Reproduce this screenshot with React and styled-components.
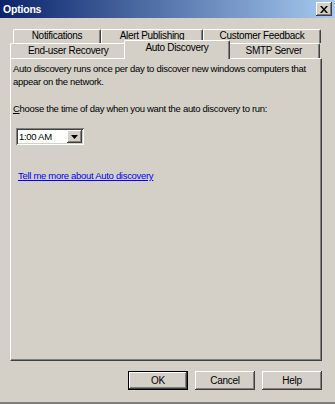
import React from "react";
import styled, { createGlobalStyle, css } from "styled-components";

const GlobalStyle = createGlobalStyle`
  html, body {
    margin: 0;
    padding: 0;
    background: #d4d0c8;
  }
  body {
    font-family: "Liberation Sans", Arial, sans-serif;
    font-size: 9.5px;
    letter-spacing: -0.3px;
    color: #000;
  }
`;

const raised = css`
  box-shadow: inset -1px -1px #404040, inset 1px 1px #ffffff,
    inset -2px -2px #808080, inset 2px 2px #d4d0c8;
`;

const Window = styled.div`
  width: 335px;
  height: 404px;
  background: #d4d0c8;
  display: flex;
  flex-direction: column;
  box-sizing: border-box;
  border-bottom: 2px solid #808080;
  overflow: hidden;
`;

const TitleBar = styled.div`
  height: 18px;
  flex: none;
  display: flex;
  align-items: center;
  justify-content: space-between;
  padding: 0 3px 0 3px;
  background: linear-gradient(to right, #0a246a, #a6caf0);
`;

const Title = styled.span`
  color: #fff;
  font-weight: bold;
  font-size: 10.5px;
  letter-spacing: -0.2px;
`;

const CloseButton = styled.div`
  width: 16px;
  height: 14px;
  background: #d4d0c8;
  ${raised};
  display: flex;
  align-items: center;
  justify-content: center;
`;

const Body = styled.div`
  flex: 1;
  display: flex;
  flex-direction: column;
  padding: 11px 13px 0 10px;
`;

const TabRow = styled.div`
  display: flex;
  height: ${(p) => p.$h}px;
  margin-left: ${(p) => p.$indent}px;
  margin-right: ${(p) => p.$right}px;
  align-items: flex-end;
`;

const Tab = styled.div`
  width: ${(p) => p.$w}px;
  height: 100%;
  box-sizing: border-box;
  background: #d4d0c8;
  border-top: 1px solid #fff;
  border-left: 1px solid #fff;
  border-right: 1px solid #404040;
  box-shadow: inset -1px 0 #808080;
  border-radius: 2px 2px 0 0;
  display: flex;
  align-items: flex-start;
  justify-content: center;
  white-space: nowrap;
  font-size: 10px;
  line-height: 12px;
  padding-top: ${(p) => (p.$back ? 0 : 1)}px;
  ${(p) =>
    p.$active &&
    css`
      position: relative;
      z-index: 2;
      height: 19px;
      margin: 0 -2px -1px -2px;
      padding-top: 1px;
    `}
`;

const Panel = styled.div`
  height: 303px;
  box-sizing: border-box;
  border-top: 1px solid #fff;
  border-left: 1px solid #fff;
  border-right: 1px solid #404040;
  border-bottom: 1px solid #404040;
  box-shadow: inset -1px -1px #808080;
  padding: 3px 3px 0 2px;
  display: flex;
  flex-direction: column;
  align-items: flex-start;
`;

const Para = styled.p`
  margin: 0 0 ${(p) => p.$gap}px 0;
  line-height: 13px;
  white-space: nowrap;
`;

const Select = styled.div`
  margin-left: 3px;
  width: 68px;
  height: 17px;
  box-sizing: border-box;
  background: #fff;
  box-shadow: inset 1px 1px #808080, inset -1px -1px #ffffff,
    inset 2px 2px #404040, inset -2px -2px #d4d0c8;
  display: flex;
  align-items: center;
  padding: 0 2px 0 3px;
  margin-bottom: 24px;
`;

const SelectValue = styled.span`
  flex: 1;
`;

const ArrowButton = styled.div`
  width: 15px;
  height: 13px;
  background: #d4d0c8;
  ${raised};
  display: flex;
  align-items: center;
  justify-content: center;
`;

const Link = styled.a`
  margin-left: 5px;
  color: #0000ff;
  text-decoration: underline;
  line-height: 13px;
`;

const ButtonRow = styled.div`
  display: flex;
  justify-content: flex-end;
  gap: 7px;
  margin-top: 10px;
`;

const Button = styled.div`
  width: 60px;
  height: 19px;
  box-sizing: border-box;
  background: #d4d0c8;
  display: flex;
  align-items: center;
  justify-content: center;
  font-size: 10px;
  ${raised};
  ${(p) =>
    p.$default &&
    css`
      border: 1px solid #000;
      box-shadow: inset -1px -1px #404040, inset 1px 1px #ffffff,
        inset -2px -2px #808080;
    `}
`;

export default function App() {
  return (
    <>
      <GlobalStyle />
      <Window>
        <TitleBar>
          <Title>Options</Title>
          <CloseButton>
            <svg width="8" height="7" viewBox="0 0 8 7">
              <path d="M0 0h2l2 2.5L6 0h2L5 3.5 8 7H6L4 4.5 2 7H0l3-3.5z" fill="#000" />
            </svg>
          </CloseButton>
        </TitleBar>
        <Body>
          <TabRow $h={14} $indent={3} $right={1}>
            <Tab $w={88} $back>Notifications</Tab>
            <Tab $w={102} $back>Alert Publishing</Tab>
            <Tab $w={118} $back>Customer Feedback</Tab>
          </TabRow>
          <TabRow $h={15} $indent={0} $right={2}>
            <Tab $w={117}>End-user Recovery</Tab>
            <Tab $w={106} $active>Auto Discovery</Tab>
            <Tab $w={93}>SMTP Server</Tab>
          </TabRow>
          <Panel>
            <Para $gap={14}>
              Auto discovery runs once per day to discover new windows computers that
              <br />
              appear on the network.
            </Para>
            <Para $gap={13}>
              <u>C</u>hoose the time of day when you want the auto discovery to run:
            </Para>
            <Select>
              <SelectValue>1:00 AM</SelectValue>
              <ArrowButton>
                <svg width="7" height="4" viewBox="0 0 7 4">
                  <path d="M0 0h7L3.5 4z" fill="#000" />
                </svg>
              </ArrowButton>
            </Select>
            <Link href="#">Tell me more about Auto discovery</Link>
          </Panel>
          <ButtonRow>
            <Button $default>OK</Button>
            <Button>Cancel</Button>
            <Button>Help</Button>
          </ButtonRow>
        </Body>
      </Window>
    </>
  );
}
